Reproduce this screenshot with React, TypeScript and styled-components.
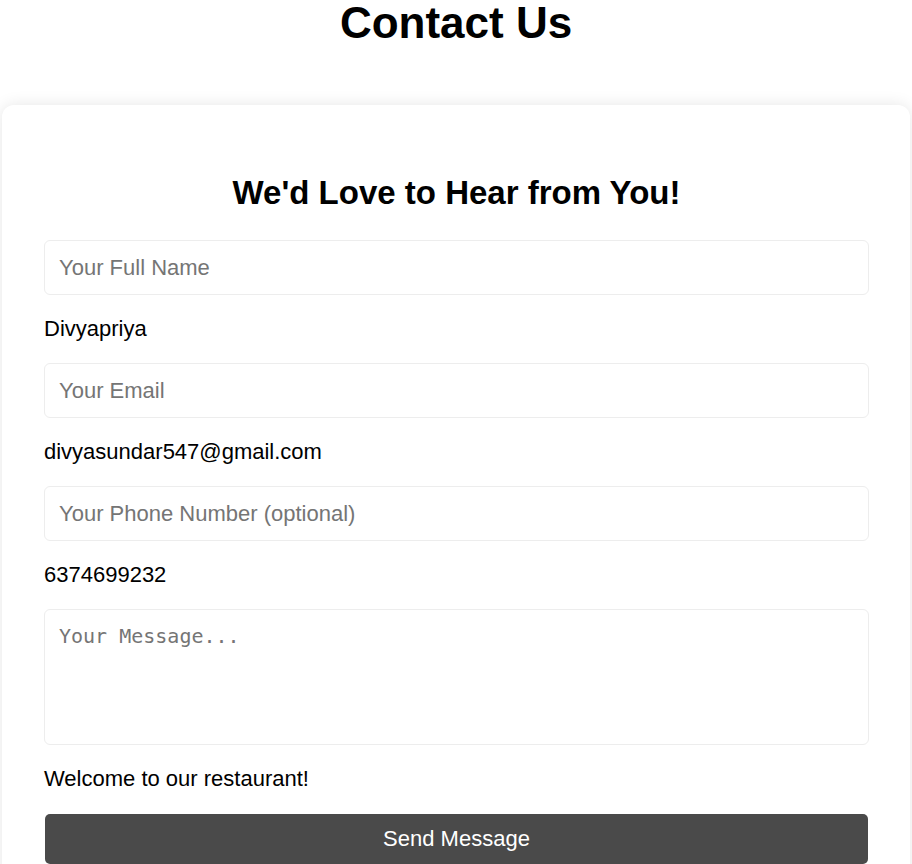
import React from "react";
import styled, { createGlobalStyle } from "styled-components";

const GlobalStyle = createGlobalStyle`
  html, body {
    margin: 0;
    padding: 0;
    background: #ffffff;
    font-family: "Liberation Sans", Arial, sans-serif;
    color: #000;
  }
  * { box-sizing: border-box; }
`;

const Page = styled.div`
  display: flex;
  flex-direction: column;
  align-items: stretch;
  padding: 0 2px;
`;

const Title = styled.h1`
  margin: 0;
  text-align: center;
  font-size: 44px;
  line-height: 46px;
  font-weight: 700;
`;

const Card = styled.section`
  margin-top: 59px;
  background: #fff;
  border-radius: 12px;
  box-shadow: 0 0 16px rgba(0, 0, 0, 0.1);
  padding: 69px 41px 40px 42px;
`;

const Heading = styled.h2`
  margin: 0 0 28px;
  text-align: center;
  font-size: 33px;
  line-height: 38px;
  font-weight: 700;
`;

const Form = styled.form`
  display: flex;
  flex-direction: column;
`;

const Field = styled.input`
  height: 55px;
  width: 100%;
  padding: 0 14px;
  border: 1px solid #ededed;
  border-radius: 6px;
  font-family: "Liberation Sans", Arial, sans-serif;
  font-size: 22px;
  color: #000;
  background: #fff;
  outline: none;
  &::placeholder { color: #757575; }
`;

const MessageArea = styled.textarea`
  height: 136px;
  width: 100%;
  padding: 15px 14px;
  border: 1px solid #ededed;
  border-radius: 6px;
  font-family: "DejaVu Sans Mono", "Liberation Mono", monospace;
  font-size: 20px;
  line-height: 23px;
  resize: none;
  background: #fff;
  outline: none;
  &::placeholder { color: #757575; }
`;

const Echo = styled.p<{ $last?: boolean }>`
  margin: 21px 0 ${(p) => (p.$last ? "23px" : "22px")};
  font-size: 22px;
  line-height: 25px;
`;

const SendButton = styled.button`
  margin: 0 1px;
  height: 50px;
  border: none;
  border-radius: 5px;
  background: #4a4a4a;
  color: #fff;
  font-family: "Liberation Sans", Arial, sans-serif;
  font-size: 22px;
  padding: 0;
  cursor: pointer;
`;

export default function App() {
  return (
    <>
      <GlobalStyle />
      <Page>
        <Title>Contact Us</Title>
        <Card>
          <Heading>We'd Love to Hear from You!</Heading>
          <Form onSubmit={(e) => e.preventDefault()}>
            <Field type="text" placeholder="Your Full Name" />
            <Echo>Divyapriya</Echo>
            <Field type="email" placeholder="Your Email" />
            <Echo>divyasundar547@gmail.com</Echo>
            <Field type="tel" placeholder="Your Phone Number (optional)" />
            <Echo>6374699232</Echo>
            <MessageArea placeholder="Your Message..." />
            <Echo $last>Welcome to our restaurant!</Echo>
            <SendButton type="submit">Send Message</SendButton>
          </Form>
        </Card>
      </Page>
    </>
  );
}
